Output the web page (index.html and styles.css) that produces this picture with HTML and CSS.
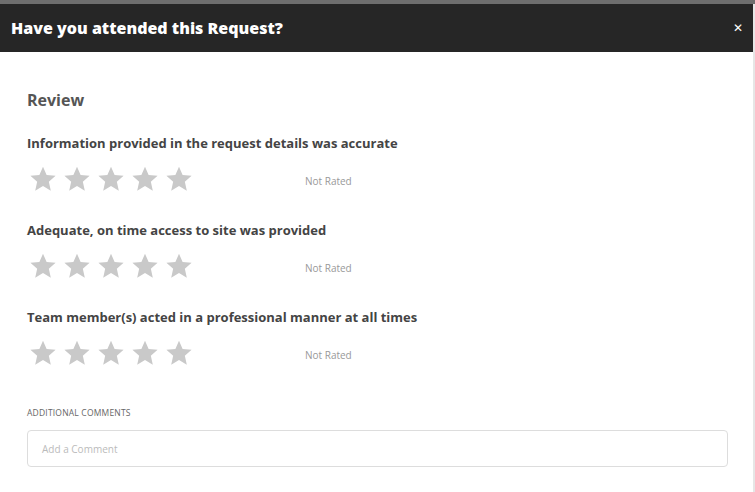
FILE: index.html
```html
<!DOCTYPE html>
<html>
<head>
<meta charset="utf-8">
<link rel="stylesheet" href="styles.css">
</head>
<body>
<div class="topstrip"></div>
<div class="modal">
  <header class="head">
    <h1 class="title">Have you attended this Request?</h1>
    <span class="close">&#x2715;</span>
  </header>
  <main class="content">
    <h2 class="review">Review</h2>
    <section class="q">
      <div class="qlabel">Information provided in the request details was accurate</div>
      <div class="rating">
        <div class="stars">
          <svg class="star" viewBox="0 0 24 24"><path d="M12 1.5l3.1 7.1 7.7.7-5.8 5.1 1.7 7.6L12 18l-6.7 4 1.7-7.6-5.8-5.1 7.7-.7z"/></svg>
          <svg class="star" viewBox="0 0 24 24"><path d="M12 1.5l3.1 7.1 7.7.7-5.8 5.1 1.7 7.6L12 18l-6.7 4 1.7-7.6-5.8-5.1 7.7-.7z"/></svg>
          <svg class="star" viewBox="0 0 24 24"><path d="M12 1.5l3.1 7.1 7.7.7-5.8 5.1 1.7 7.6L12 18l-6.7 4 1.7-7.6-5.8-5.1 7.7-.7z"/></svg>
          <svg class="star" viewBox="0 0 24 24"><path d="M12 1.5l3.1 7.1 7.7.7-5.8 5.1 1.7 7.6L12 18l-6.7 4 1.7-7.6-5.8-5.1 7.7-.7z"/></svg>
          <svg class="star" viewBox="0 0 24 24"><path d="M12 1.5l3.1 7.1 7.7.7-5.8 5.1 1.7 7.6L12 18l-6.7 4 1.7-7.6-5.8-5.1 7.7-.7z"/></svg>
        </div>
        <span class="status">Not Rated</span>
      </div>
    </section>
    <section class="q">
      <div class="qlabel">Adequate, on time access to site was provided</div>
      <div class="rating">
        <div class="stars">
          <svg class="star" viewBox="0 0 24 24"><path d="M12 1.5l3.1 7.1 7.7.7-5.8 5.1 1.7 7.6L12 18l-6.7 4 1.7-7.6-5.8-5.1 7.7-.7z"/></svg>
          <svg class="star" viewBox="0 0 24 24"><path d="M12 1.5l3.1 7.1 7.7.7-5.8 5.1 1.7 7.6L12 18l-6.7 4 1.7-7.6-5.8-5.1 7.7-.7z"/></svg>
          <svg class="star" viewBox="0 0 24 24"><path d="M12 1.5l3.1 7.1 7.7.7-5.8 5.1 1.7 7.6L12 18l-6.7 4 1.7-7.6-5.8-5.1 7.7-.7z"/></svg>
          <svg class="star" viewBox="0 0 24 24"><path d="M12 1.5l3.1 7.1 7.7.7-5.8 5.1 1.7 7.6L12 18l-6.7 4 1.7-7.6-5.8-5.1 7.7-.7z"/></svg>
          <svg class="star" viewBox="0 0 24 24"><path d="M12 1.5l3.1 7.1 7.7.7-5.8 5.1 1.7 7.6L12 18l-6.7 4 1.7-7.6-5.8-5.1 7.7-.7z"/></svg>
        </div>
        <span class="status">Not Rated</span>
      </div>
    </section>
    <section class="q">
      <div class="qlabel">Team member(s) acted in a professional manner at all times</div>
      <div class="rating">
        <div class="stars">
          <svg class="star" viewBox="0 0 24 24"><path d="M12 1.5l3.1 7.1 7.7.7-5.8 5.1 1.7 7.6L12 18l-6.7 4 1.7-7.6-5.8-5.1 7.7-.7z"/></svg>
          <svg class="star" viewBox="0 0 24 24"><path d="M12 1.5l3.1 7.1 7.7.7-5.8 5.1 1.7 7.6L12 18l-6.7 4 1.7-7.6-5.8-5.1 7.7-.7z"/></svg>
          <svg class="star" viewBox="0 0 24 24"><path d="M12 1.5l3.1 7.1 7.7.7-5.8 5.1 1.7 7.6L12 18l-6.7 4 1.7-7.6-5.8-5.1 7.7-.7z"/></svg>
          <svg class="star" viewBox="0 0 24 24"><path d="M12 1.5l3.1 7.1 7.7.7-5.8 5.1 1.7 7.6L12 18l-6.7 4 1.7-7.6-5.8-5.1 7.7-.7z"/></svg>
          <svg class="star" viewBox="0 0 24 24"><path d="M12 1.5l3.1 7.1 7.7.7-5.8 5.1 1.7 7.6L12 18l-6.7 4 1.7-7.6-5.8-5.1 7.7-.7z"/></svg>
        </div>
        <span class="status">Not Rated</span>
      </div>
    </section>
    <div class="comments">
      <label class="clabel">ADDITIONAL COMMENTS</label>
      <div class="cinput">Add a Comment</div>
    </div>
  </main>
</div>
</body>
</html>
```

FILE: styles.css
```css
* { box-sizing: border-box; }
html, body { margin: 0; padding: 0; background: #fff; }
body { font-family: "Open Sans", "Noto Sans", sans-serif; width: 755px; height: 492px; overflow: hidden; }
.topstrip { height: 4px; background: #6e6e6e; }
.modal { border-right: 2px solid #e6e6e6; height: 488px; }
.head {
  height: 48px; background: #262626; display: flex; align-items: center;
  justify-content: space-between; padding: 0 10px 0 11px;
}
.title { margin: 0; color: #fff; font-size: 16px; font-weight: 800; line-height: 20px; }
.close { color: #fff; font-size: 12px; font-weight: 900; font-family: "DejaVu Sans", sans-serif; }
.content { padding: 38px 27px 0 27px; }
.review { margin: 0 0 25px 0; font-size: 16px; font-weight: 700; color: #555; line-height: 20px; }
.q { margin-bottom: 29px; }
.q:last-of-type { margin-bottom: 0; }
.qlabel { font-size: 13px; font-weight: 700; color: #444; line-height: 16px; margin-bottom: 14px; }
.rating { display: flex; align-items: center; height: 28px; }
.stars { display: flex; gap: 6px; margin-left: 2px; width: 276px; }
.star { width: 28px; height: 28px; fill: #c9c9c9; }
.status { font-size: 10px; color: #999; line-height: 12px; margin-top: 3px; }
.comments { margin-top: 41px; }
.clabel { display: block; font-size: 8.5px; letter-spacing: 0.2px; color: #666; line-height: 10px; margin-bottom: 12px; }
.cinput {
  width: 701px; height: 37px; border: 1px solid #ddd; border-radius: 4px;
  padding: 0 14px; display: flex; align-items: center; font-size: 10px; color: #bbb;
}
```
